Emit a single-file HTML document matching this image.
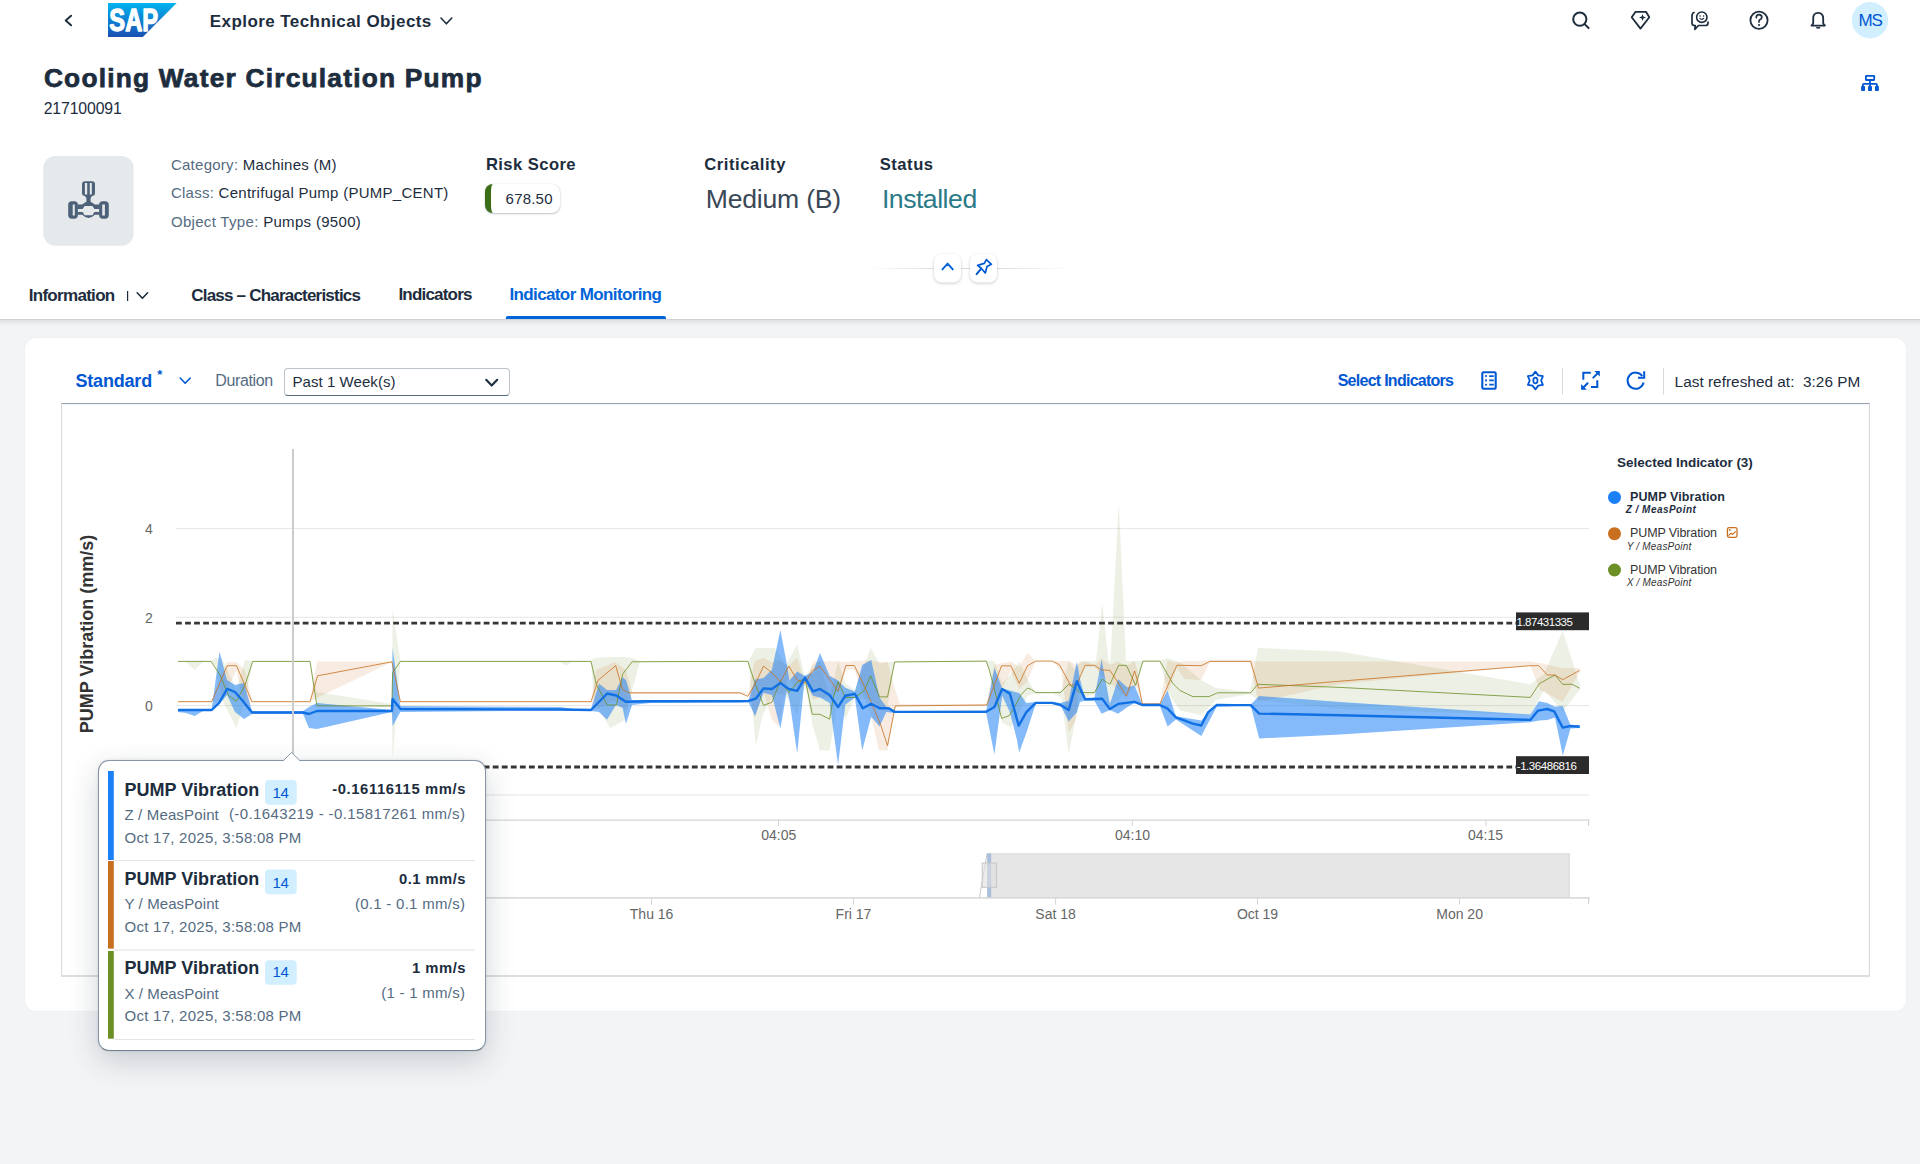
<!DOCTYPE html>
<html><head><meta charset="utf-8"><title>Explore Technical Objects</title>
<style>
html,body{margin:0;padding:0;}
body{width:1920px;height:1164px;overflow:hidden;background:#f3f4f6;position:relative;font-family:'Liberation Sans', sans-serif;}
.t{position:absolute;white-space:nowrap;font-family:'Liberation Sans', sans-serif;z-index:10}
svg{position:absolute;overflow:visible}
</style></head><body>
<div style="position:absolute;left:0px;top:0px;width:1920px;height:319px;background:#fff;z-index:1"></div><div style="position:absolute;left:0px;top:319px;width:1920px;height:1px;background:#cfd2d6;z-index:1"></div><div style="position:absolute;left:0px;top:320px;width:1920px;height:6px;background:linear-gradient(#dfe2e5,#e6e9eb 40%,rgba(243,244,246,0));z-index:1"></div><div style="position:absolute;left:25px;top:338px;width:1881px;height:673px;background:#fff;border-radius:11px;box-shadow:0 0 2px rgba(29,45,62,0.06)"></div><div style="position:absolute;left:61px;top:403px;width:1808.5px;height:573.5px;border-top:1.5px solid #97a3af;border-left:1px solid #dadada;border-right:1px solid #dadada;border-bottom:2px solid #dedede;box-sizing:border-box;background:#fff;box-shadow:inset 0 1px 2px rgba(0,0,0,0.05)"></div><svg style="left:0;top:0;z-index:6" width="1920" height="60" viewBox="0 0 1920 60"><path d="M71.1 15.7 L65.7 20.5 L71.1 25.3" fill="none" stroke="#1d2d3e" stroke-width="1.9" stroke-linecap="round" stroke-linejoin="round"/><defs><linearGradient id="sapg" x1="0" y1="0" x2="0" y2="1"><stop offset="0" stop-color="#00b4f0"/><stop offset="1" stop-color="#1c4fb3"/></linearGradient></defs><polygon points="108,2.9 176.7,2.9 142.8,36.9 108,36.9" fill="url(#sapg)"/><text x="109.3" y="30.8" font-family="Liberation Sans" font-weight="bold" font-size="30.5" textLength="48.8" lengthAdjust="spacingAndGlyphs" fill="#fff" stroke="#fff" stroke-width="1.3" stroke-linejoin="round">SAP</text><path d="M441 18 L446.4 23.8 L451.8 18" fill="none" stroke="#1d2d3e" stroke-width="1.6" stroke-linecap="round" stroke-linejoin="round"/><circle cx="1579.8" cy="19.2" r="6.6" fill="none" stroke="#1d2d3e" stroke-width="2"/><path d="M1584.6 24.1 L1588.6 28" stroke="#1d2d3e" stroke-width="2" stroke-linecap="round"/><path d="M1635.6 11.8 L1646 11.8 L1649.3 17.3 L1640.5 28.6 L1631.7 17.3 Z" fill="none" stroke="#1d2d3e" stroke-width="1.8" stroke-linejoin="round"/><path d="M1642.5 14 L1643.4 16.6 L1646 17.5 L1643.4 18.4 L1642.5 21 L1641.6 18.4 L1639 17.5 L1641.6 16.6 Z" fill="#1d2d3e"/><path d="M1694 12.5 Q1692 13 1692 16 L1692 23 Q1692 25.5 1694.5 25.5 L1695.3 25.5 L1694.8 29.3 L1698.5 25.5 L1705.5 25.5 Q1708 25.5 1708 23 L1708 22" fill="none" stroke="#1d2d3e" stroke-width="1.7" stroke-linecap="round" stroke-linejoin="round"/><circle cx="1701.8" cy="17.2" r="5.2" fill="none" stroke="#1d2d3e" stroke-width="1.6"/><path d="M1699.6 18.2 Q1701.8 20.4 1704 18.2" fill="none" stroke="#1d2d3e" stroke-width="1.2"/><circle cx="1700" cy="16" r="0.8" fill="#1d2d3e"/><circle cx="1703.6" cy="16" r="0.8" fill="#1d2d3e"/><circle cx="1759" cy="20.3" r="8.6" fill="none" stroke="#1d2d3e" stroke-width="1.8"/><path d="M1756.3 17.6 Q1756.3 14.6 1759 14.6 Q1761.8 14.6 1761.8 17.3 Q1761.8 19 1759.8 19.8 Q1759 20.3 1759 22" fill="none" stroke="#1d2d3e" stroke-width="1.7" stroke-linecap="round"/><circle cx="1759" cy="25" r="1.1" fill="#1d2d3e"/><path d="M1811.5 25.6 L1813.2 23.5 L1813.2 18.5 Q1813.2 12.8 1818.2 12.8 Q1823.2 12.8 1823.2 18.5 L1823.2 23.5 L1824.9 25.6 Z" fill="none" stroke="#1d2d3e" stroke-width="1.8" stroke-linejoin="round"/><path d="M1816.3 27.3 Q1818.2 28.6 1820.1 27.3" fill="none" stroke="#1d2d3e" stroke-width="1.6"/><circle cx="1870" cy="20.2" r="18.2" fill="#d1efff"/></svg><div class="t" style="left:209.80px;top:12.55px;font-size:17px;line-height:17px;color:#1d2d3e;font-weight:bold;letter-spacing:0.425px;">Explore Technical Objects</div><div class="t" style="left:1858.40px;top:11.65px;font-size:17px;line-height:17px;color:#0057d2;letter-spacing:-1.100px;z-index:7">MS</div><div class="t" style="left:43.90px;top:64.64px;font-size:26.3px;line-height:26.3px;color:#1d2d3e;font-weight:bold;letter-spacing:1.218px;-webkit-text-stroke:0.75px #1d2d3e">Cooling Water Circulation Pump</div><div class="t" style="left:43.70px;top:101.17px;font-size:15.8px;line-height:15.8px;color:#1d2d3e;letter-spacing:-0.129px;">217100091</div><svg style="left:0;top:0;z-index:6" width="1920" height="330" viewBox="0 0 1920 330"><rect x="1865.9" y="75.8" width="8.3" height="4.2" rx="0.4" fill="none" stroke="#0057d2" stroke-width="1.8"/><path d="M1870 80.8 V86.2 M1862.9 86.4 V85 Q1862.9 83.9 1864 83.9 H1875.9 Q1877 83.9 1877 85 V86.4" fill="none" stroke="#0057d2" stroke-width="1.8"/><rect x="1861.1" y="86" width="3.9" height="4.9" rx="0.7" fill="#0057d2"/><rect x="1868.05" y="86" width="3.9" height="4.9" rx="0.7" fill="#0057d2"/><rect x="1875" y="86" width="3.9" height="4.9" rx="0.7" fill="#0057d2"/><rect x="43.3" y="156" width="90.3" height="89.8" rx="12" fill="#e6e9ec"/><path fill-rule="evenodd" fill="#4d6279" d="M85 181.2 H92 Q95 181.2 95 184.2 V193 Q95 196 92 196 H85 Q82 196 82 193 V184.2 Q82 181.2 85 181.2 Z M84.9 182.9 V194.4 H87.2 V182.9 Z M89.8 182.9 V194.4 H91.8 V182.9 Z"/><path fill="#4d6279" d="M84.5 195.5 H92.5 L90.6 198 V202.5 H86.4 V198 Z"/><path fill-rule="evenodd" fill="#4d6279" d="M71.8 201.2 H74.3 Q77.9 201.2 77.9 204.8 V215.1 Q77.9 218.7 74.3 218.7 H71.8 Q68.2 218.7 68.2 215.1 V204.8 Q68.2 201.2 71.8 201.2 Z M72.7 204.5 V215.4 H74.8 V204.5 Z"/><path fill-rule="evenodd" fill="#4d6279" d="M102.7 201.2 H105.2 Q108.8 201.2 108.8 204.8 V215.1 Q108.8 218.7 105.2 218.7 H102.7 Q99.1 218.7 99.1 215.1 V204.8 Q99.1 201.2 102.7 201.2 Z M102.2 204.5 V215.4 H104.9 V204.5 Z"/><path fill-rule="evenodd" fill="#4d6279" d="M77.5 204.5 H82.2 Q88.5 198.6 94.8 204.5 H99.5 V214.8 H94.8 Q88.5 221.2 82.2 214.8 H77.5 Z M77.5 209 H82.6 L84.6 206.1 H92.4 L94.4 209 H99.5 V211.9 H94.4 L92.4 215.2 H84.6 L82.6 211.9 H77.5 Z"/><defs><linearGradient id="clg" x1="0" x2="1"><stop offset="0" stop-color="#d9dde2" stop-opacity="0"/><stop offset="0.35" stop-color="#d9dde2"/><stop offset="0.65" stop-color="#d9dde2"/><stop offset="1" stop-color="#d9dde2" stop-opacity="0"/></linearGradient></defs><rect x="866" y="268" width="204" height="1" fill="url(#clg)"/><rect x="934" y="254" width="27" height="28.5" rx="8" fill="#fff" style="filter:drop-shadow(0 1px 1.5px rgba(0,0,0,0.2))"/><rect x="970" y="254" width="27" height="28.5" rx="8" fill="#fff" style="filter:drop-shadow(0 1px 1.5px rgba(0,0,0,0.2))"/><path d="M942.4 269.4 L947.6 263.6 L952.8 269.4" fill="none" stroke="#0064d9" stroke-width="1.9" stroke-linecap="round" stroke-linejoin="round"/><path d="M976.6 274.2 L980.8 269.2" stroke="#0057d2" stroke-width="1.9" stroke-linecap="round"/><path d="M977.6 265.4 L984.3 263.4 L986.4 259.6 L991.4 264.3 L987 266.6 L985.3 273 L980.9 268 Z" fill="none" stroke="#0057d2" stroke-width="1.7" stroke-linejoin="round"/><rect x="127" y="291" width="1.2" height="10" fill="#1d2d3e"/><path d="M137.2 292.8 L142.4 298.2 L147.6 292.8" fill="none" stroke="#1d2d3e" stroke-width="1.6" stroke-linecap="round" stroke-linejoin="round"/><path d="M505.8 319 L505.8 318 Q505.8 316 507.8 316 L664 316 Q666 316 666 318 L666 319 Z" fill="#0064d9"/></svg><div style="position:absolute;left:485px;top:183.5px;width:75px;height:29.5px;box-sizing:border-box;border-left:6px solid #3a6d16;border-radius:8px;background:#fff;box-shadow:0 1px 2px rgba(29,45,62,0.28),0 0 1px rgba(29,45,62,0.2);z-index:7"></div><div class="t" style="left:170.90px;top:157.25px;font-size:15px;line-height:15px;letter-spacing:0.267px;"><span style="color:#556b82;">Category: </span><span style="color:#1d2d3e;">Machines (M)</span></div><div class="t" style="left:170.90px;top:184.85px;font-size:15px;line-height:15px;letter-spacing:0.265px;"><span style="color:#556b82;">Class: </span><span style="color:#1d2d3e;">Centrifugal Pump (PUMP_CENT)</span></div><div class="t" style="left:170.90px;top:214.05px;font-size:15px;line-height:15px;letter-spacing:0.318px;"><span style="color:#556b82;">Object Type: </span><span style="color:#1d2d3e;">Pumps (9500)</span></div><div class="t" style="left:485.90px;top:157.09px;font-size:16.6px;line-height:16.6px;color:#1d2d3e;font-weight:bold;letter-spacing:0.434px;">Risk Score</div><div class="t" style="left:505.60px;top:191.00px;font-size:15px;line-height:15px;color:#1d2d3e;letter-spacing:0.202px;">678.50</div><div class="t" style="left:704.20px;top:156.89px;font-size:16.6px;line-height:16.6px;color:#1d2d3e;font-weight:bold;letter-spacing:0.556px;">Criticality</div><div class="t" style="left:705.80px;top:185.59px;font-size:26.6px;line-height:26.6px;color:#3a4756;letter-spacing:-0.228px;">Medium (B)</div><div class="t" style="left:879.70px;top:156.79px;font-size:16.6px;line-height:16.6px;color:#1d2d3e;font-weight:bold;letter-spacing:0.533px;">Status</div><div class="t" style="left:881.90px;top:185.69px;font-size:26.6px;line-height:26.6px;color:#2a7a87;letter-spacing:-0.472px;">Installed</div><div class="t" style="left:28.70px;top:286.95px;font-size:17px;line-height:17px;color:#1d2d3e;font-weight:bold;letter-spacing:-0.698px;">Information</div><div class="t" style="left:191.30px;top:286.95px;font-size:17px;line-height:17px;color:#1d2d3e;font-weight:bold;letter-spacing:-0.794px;">Class – Characteristics</div><div class="t" style="left:398.40px;top:286.35px;font-size:17px;line-height:17px;color:#1d2d3e;font-weight:bold;letter-spacing:-0.793px;">Indicators</div><div class="t" style="left:509.40px;top:286.35px;font-size:17px;line-height:17px;color:#0064d9;font-weight:bold;letter-spacing:-0.616px;">Indicator Monitoring</div><div class="t" style="left:75.50px;top:371.60px;font-size:18px;line-height:18px;color:#0057d2;font-weight:bold;letter-spacing:-0.190px;">Standard</div><div class="t" style="left:157.20px;top:368.45px;font-size:13px;line-height:13px;color:#0057d2;font-weight:bold;">*</div><div class="t" style="left:215.30px;top:373.30px;font-size:16px;line-height:16px;color:#556b82;letter-spacing:-0.390px;">Duration</div><div style="position:absolute;left:283.5px;top:367.5px;width:226px;height:28px;box-sizing:border-box;border:1px solid #bcc3ca;border-bottom:1px solid #556b82;border-radius:4px;background:#fff;z-index:4"></div><div class="t" style="left:292.40px;top:373.95px;font-size:15px;line-height:15px;color:#1d2d3e;letter-spacing:0.071px;">Past 1 Week(s)</div><div class="t" style="left:1337.70px;top:372.50px;font-size:16px;line-height:16px;color:#0057d2;font-weight:bold;letter-spacing:-0.735px;">Select Indicators</div><div class="t" style="left:1674.60px;top:373.69px;font-size:15.3px;line-height:15.3px;color:#1d2d3e;letter-spacing:0.044px;white-space:pre">Last refreshed at:  3:26 PM</div><svg style="left:0;top:330px;z-index:6" width="1920" height="80" viewBox="0 330 1920 80"><path d="M180.2 378 L185.2 383.2 L190.2 378" fill="none" stroke="#0057d2" stroke-width="1.6" stroke-linecap="round" stroke-linejoin="round"/><path d="M486.2 379.8 L491.7 385.4 L497.2 379.8" fill="none" stroke="#1d2d3e" stroke-width="2.1" stroke-linecap="round" stroke-linejoin="round"/><rect x="1482.3" y="372.3" width="13.4" height="16.4" rx="1.2" fill="none" stroke="#0057d2" stroke-width="2.1"/><circle cx="1486" cy="376.1" r="1.05" fill="#0057d2"/><circle cx="1486" cy="380.4" r="1.05" fill="#0057d2"/><circle cx="1486" cy="384.7" r="1.05" fill="#0057d2"/><path d="M1489.2 376.1 H1493.8 M1489.2 380.4 H1493.8 M1489.2 384.7 H1493.8" stroke="#0057d2" stroke-width="1.7"/><polygon points="1535.40,371.60 1538.26,375.39 1542.88,376.05 1541.12,380.50 1542.88,384.95 1538.26,385.61 1535.40,389.40 1532.54,385.61 1527.92,384.95 1529.68,380.50 1527.92,376.05 1532.54,375.39" fill="none" stroke="#0057d2" stroke-width="1.8" stroke-linejoin="round"/><ellipse cx="1535.4" cy="380.5" rx="2.1" ry="2.9" fill="none" stroke="#0057d2" stroke-width="1.7"/><rect x="1562" y="367.7" width="1" height="26.7" fill="#d5dadd"/><path d="M1583.3 379.8 V372.8 H1590.8 M1597.3 380.2 V387.1 H1591" fill="none" stroke="#0057d2" stroke-width="2"/><path d="M1593.3 377.6 L1598.3 372.6 M1587.6 383.2 L1582.6 388.2" stroke="#0057d2" stroke-width="2" stroke-linecap="round"/><polygon points="1594.4,371.1 1599.8,371.1 1599.8,376.6" fill="#0057d2"/><polygon points="1581.1,384.1 1581.1,389.7 1586.8,389.7" fill="#0057d2"/><path d="M1643.6 382.6 A8.1 8.1 0 1 1 1642.3 376.0" fill="none" stroke="#0057d2" stroke-width="2"/><path d="M1644.2 371.2 V377.8 H1638" fill="none" stroke="#0057d2" stroke-width="2"/><rect x="1663" y="368.2" width="1" height="26.3" fill="#d5dadd"/></svg><svg style="left:0;top:0;z-index:3" width="1920" height="1164" viewBox="0 0 1920 1164"><rect x="176" y="527.9" width="1413" height="1" fill="#e6e6e6"/><rect x="176" y="616.8" width="1413" height="1" fill="#e6e6e6"/><rect x="176" y="705.1" width="1413" height="1" fill="#e6e6e6"/><rect x="176" y="794.5" width="1413" height="1" fill="#e6e6e6"/><rect x="176" y="819.5" width="1413.5" height="1.2" fill="#d4d4d4"/><rect x="778.0" y="820" width="1" height="6" fill="#d4d4d4"/><rect x="1131.8" y="820" width="1" height="6" fill="#d4d4d4"/><rect x="1485.5" y="820" width="1" height="6" fill="#d4d4d4"/><rect x="1588" y="819.5" width="1.2" height="6.5" fill="#d4d4d4"/><rect x="987" y="853.4" width="582.4" height="44.4" fill="#e6e6e6"/><rect x="1568.6" y="853.4" width="1" height="44.4" fill="#d6d6d6"/><rect x="987" y="853.4" width="582.4" height="1" fill="#dcdcdc"/><path d="M979.5 897.5 L987 853.6" stroke="#c8c8c8" stroke-width="1" fill="none"/><rect x="987.2" y="853.4" width="4" height="44.4" fill="#a9bfdc"/><rect x="982.2" y="863" width="14.4" height="24.3" fill="#e0e0e0" fill-opacity="0.6" stroke="#c6c6c6" stroke-width="1"/><rect x="176" y="897.2" width="1413.5" height="1.4" fill="#d4d4d4"/><rect x="651.0" y="898" width="1" height="6.5" fill="#d4d4d4"/><rect x="853.0" y="898" width="1" height="6.5" fill="#d4d4d4"/><rect x="1055.1" y="898" width="1" height="6.5" fill="#d4d4d4"/><rect x="1257.0" y="898" width="1" height="6.5" fill="#d4d4d4"/><rect x="1459.0" y="898" width="1" height="6.5" fill="#d4d4d4"/><rect x="1588" y="897.2" width="1.2" height="7" fill="#d4d4d4"/><polygon points="178.0,661.0 186.0,661.0 194.7,661.0 203.0,661.0 211.0,661.0 215.0,658.0 222.0,658.0 236.5,690.0 245.0,660.0 252.7,661.0 310.0,661.0 317.0,692.0 391.9,704.0 392.6,609.3 400.4,661.0 560.0,661.0 566.0,661.0 572.0,661.0 591.0,661.0 594.0,658.0 610.0,657.0 625.0,657.0 632.0,658.0 640.0,661.0 748.4,661.3 755.7,648.0 762.9,648.0 775.0,648.0 785.8,665.0 797.2,644.5 805.0,678.2 812.3,666.1 820.0,661.3 829.6,697.5 838.1,661.3 845.3,683.0 854.9,690.2 870.6,648.1 879.6,663.7 887.5,661.9 894.7,661.9 900.0,661.5 986.2,661.0 990.0,661.0 994.4,661.0 1002.2,683.3 1010.9,674.0 1019.2,661.6 1027.4,679.2 1035.7,692.6 1052.2,692.6 1061.4,690.0 1068.7,661.1 1074.8,670.0 1080.0,661.0 1094.4,661.0 1096.0,661.0 1102.3,603.4 1108.5,661.0 1110.5,661.0 1118.8,502.4 1126.0,661.0 1135.7,661.0 1142.9,661.0 1159.9,661.0 1167.6,658.0 1172.8,660.0 1180.0,662.0 1201.0,680.0 1216.0,688.0 1250.0,692.0 1258.0,647.9 1340.0,651.6 1530.3,684.3 1544.0,674.0 1562.7,631.0 1579.7,684.3 1579.7,690.0 1562.7,711.4 1544.0,690.0 1530.3,715.2 1340.0,709.0 1258.0,700.0 1250.0,694.0 1216.0,700.0 1201.0,715.0 1180.0,710.5 1172.8,700.0 1167.6,690.0 1159.9,662.0 1142.9,662.0 1135.7,686.4 1126.0,690.0 1118.8,700.0 1110.5,705.0 1108.5,705.0 1102.3,700.0 1096.0,693.0 1094.4,693.6 1080.0,700.0 1074.8,722.5 1068.7,754.4 1061.4,697.7 1052.2,693.6 1035.7,693.6 1027.4,695.7 1019.2,712.2 1010.9,727.6 1002.2,722.5 994.4,691.5 990.0,672.0 986.2,662.0 900.0,662.0 894.7,662.5 887.5,707.1 879.6,707.1 870.6,700.0 854.9,697.5 845.3,719.2 838.1,700.0 829.6,750.5 820.0,750.5 812.3,724.0 805.0,684.2 797.2,714.3 785.8,695.0 775.0,692.7 762.9,714.3 755.7,745.7 748.4,662.0 640.0,662.0 632.0,690.0 625.0,720.0 610.0,728.3 594.0,700.0 591.0,662.0 572.0,662.0 566.0,665.7 560.0,662.0 400.4,662.0 392.6,759.0 391.9,707.0 317.0,706.0 310.0,662.0 252.7,662.0 245.0,700.0 236.5,728.0 222.0,700.0 215.0,665.0 211.0,662.0 203.0,662.0 194.7,670.0 186.0,662.0 178.0,662.0" fill="#6c8f26" fill-opacity="0.12"/><polygon points="178.0,701.0 211.7,701.0 220.0,680.0 227.0,662.0 236.5,662.0 245.0,670.0 252.0,701.0 310.0,701.0 317.0,661.4 391.9,661.4 400.4,701.0 591.0,701.0 596.0,670.0 615.0,662.0 626.0,670.0 632.0,692.0 739.7,692.0 748.4,692.7 754.5,661.3 763.5,657.7 771.9,662.5 778.6,660.0 788.2,666.1 797.2,657.7 805.0,683.0 813.5,661.3 820.0,661.3 829.6,661.3 838.1,661.3 845.9,662.0 854.3,661.0 870.6,660.5 879.0,661.9 887.5,661.9 895.3,690.0 900.0,704.0 986.3,704.0 994.4,664.7 1010.9,661.6 1019.2,667.0 1027.4,652.9 1035.7,661.1 1052.2,661.1 1061.4,661.1 1068.7,661.1 1076.0,665.0 1080.0,663.2 1085.2,661.6 1094.4,664.7 1101.6,658.6 1109.9,664.7 1118.1,661.6 1126.4,665.8 1134.6,661.1 1137.7,670.9 1142.4,702.9 1159.9,702.9 1167.6,660.6 1176.9,662.7 1184.0,661.0 1201.0,661.0 1210.0,660.0 1250.0,660.0 1258.0,661.4 1340.0,661.4 1530.3,661.4 1540.0,663.0 1562.7,668.0 1579.7,668.0 1579.7,672.0 1562.7,702.0 1540.0,690.0 1530.3,665.7 1340.0,684.0 1258.0,702.0 1250.0,662.0 1210.0,662.0 1201.0,680.0 1184.0,679.0 1176.9,667.8 1167.6,693.6 1159.9,705.0 1142.4,705.0 1137.7,690.0 1134.6,685.4 1126.4,698.0 1118.1,690.0 1109.9,683.3 1101.6,676.0 1094.4,666.8 1085.2,666.8 1080.0,675.0 1076.0,720.0 1068.7,732.8 1061.4,671.0 1052.2,661.1 1035.7,661.1 1027.4,681.2 1019.2,689.5 1010.9,671.0 994.4,704.0 986.3,706.0 900.0,706.0 895.3,707.1 887.5,750.5 879.0,750.5 870.6,714.3 854.3,669.8 845.9,669.8 838.1,691.0 829.6,697.5 820.0,697.5 813.5,700.0 805.0,685.4 797.2,690.0 788.2,678.2 778.6,726.4 771.9,719.2 763.5,692.7 754.5,718.0 748.4,694.0 739.7,694.0 632.0,694.0 626.0,710.0 615.0,700.0 596.0,710.0 591.0,702.0 400.4,702.0 391.9,662.0 317.0,698.0 310.0,702.0 252.0,702.0 245.0,710.0 236.5,670.0 227.0,690.0 220.0,702.0 211.7,702.0 178.0,702.0" fill="#c8701f" fill-opacity="0.13"/><polygon points="178.0,709.0 186.0,709.0 194.7,709.0 203.0,709.0 211.7,709.0 219.5,651.8 227.0,680.0 235.0,685.0 244.0,683.0 252.0,711.0 303.0,711.0 309.0,707.0 317.0,703.0 391.9,710.0 392.6,647.9 400.4,706.0 560.8,707.0 573.0,709.0 591.0,709.0 599.0,683.5 607.0,690.0 616.0,690.0 622.6,677.3 626.0,680.0 632.0,700.0 650.0,700.0 748.4,700.5 755.1,679.4 763.5,678.0 771.9,669.8 780.4,630.0 787.0,665.0 789.4,680.6 797.2,671.6 804.5,675.8 812.9,672.2 820.0,652.9 829.6,675.8 838.1,680.6 845.3,687.8 854.9,691.4 862.2,665.0 871.2,660.1 879.6,697.5 886.3,707.1 894.7,710.9 900.0,710.9 986.2,710.5 994.4,667.8 1002.2,688.4 1009.9,690.5 1017.0,692.6 1019.2,693.0 1026.4,702.9 1035.7,701.9 1052.2,701.9 1060.4,702.9 1068.7,700.8 1076.9,661.6 1080.0,679.2 1085.2,698.8 1094.4,697.7 1101.6,659.6 1109.9,703.9 1118.1,679.2 1127.4,687.4 1134.6,685.4 1142.4,704.5 1159.9,704.5 1167.6,690.5 1175.9,716.3 1201.3,720.6 1216.7,703.6 1250.7,704.6 1259.2,695.9 1340.0,702.1 1530.3,714.5 1539.0,701.3 1547.3,702.9 1555.0,706.7 1562.8,706.0 1570.5,725.3 1579.7,725.0 1579.7,728.0 1570.5,728.4 1562.8,755.5 1555.0,717.6 1547.3,720.0 1539.0,720.6 1530.3,722.2 1340.0,734.6 1259.2,738.4 1250.7,705.6 1216.7,706.7 1201.3,736.0 1175.9,719.4 1167.6,726.6 1159.9,706.0 1142.4,706.0 1134.6,702.9 1127.4,707.0 1118.1,713.7 1109.9,710.0 1101.6,713.7 1094.4,700.8 1085.2,700.8 1080.0,701.9 1076.9,712.2 1068.7,721.4 1060.4,705.0 1052.2,703.9 1035.7,703.9 1026.4,732.8 1019.2,752.4 1017.0,740.0 1009.9,712.2 1002.2,695.7 994.4,754.4 986.2,713.0 900.0,713.0 894.7,713.1 886.3,712.0 879.6,726.4 871.2,716.7 862.2,750.5 854.9,697.5 845.3,704.7 838.1,765.0 829.6,703.0 820.0,697.5 812.9,695.7 804.5,680.6 797.2,753.5 789.4,700.0 787.0,690.2 780.4,728.8 771.9,695.0 763.5,692.7 755.1,716.0 748.4,702.0 650.0,703.0 632.0,705.0 626.0,723.7 622.6,708.0 616.0,705.0 607.0,719.8 599.0,712.0 591.0,711.0 573.0,711.0 560.8,710.5 400.4,712.0 392.6,726.0 391.9,712.0 317.0,729.0 309.0,728.0 303.0,714.0 252.0,714.0 244.0,719.0 235.0,712.0 227.0,695.0 219.5,704.0 211.7,711.0 203.0,711.0 194.7,716.0 186.0,713.0 178.0,712.0" fill="#1b7ff6" fill-opacity="0.54"/><polyline points="178.0,661.4 211.0,661.4 220.0,675.0 228.7,695.9 236.5,701.2 245.0,685.0 252.7,661.4 310.0,661.4 316.9,705.9 391.9,705.9 392.6,672.7 400.4,661.4 591.0,661.4 596.3,684.3 607.2,705.0 616.4,705.0 622.6,674.2 632.0,661.8 740.0,661.3 747.8,661.3 754.5,681.8 763.5,705.3 771.9,702.3 780.4,680.6 788.8,692.7 797.2,682.4 805.0,678.2 812.3,714.3 820.0,714.3 829.6,719.2 833.3,697.5 838.1,681.8 845.3,697.5 854.9,697.5 864.6,690.2 870.6,675.8 879.6,696.9 887.5,696.9 894.7,661.9 900.0,661.9 986.2,661.1 989.3,670.0 993.4,685.4 1001.6,718.4 1008.9,715.8 1014.0,708.0 1021.2,694.6 1027.4,688.0 1031.5,689.5 1035.7,692.6 1060.4,692.6 1068.7,684.3 1076.9,689.5 1080.0,692.6 1094.4,692.6 1102.2,679.2 1109.9,684.3 1118.7,665.3 1126.4,665.3 1135.7,685.4 1142.9,661.1 1159.9,661.1 1172.8,683.3 1180.0,690.5 1192.8,696.6 1209.0,696.6 1217.5,692.8 1250.7,692.8 1257.7,684.3 1340.0,687.4 1530.3,697.4 1539.5,683.5 1555.0,675.0 1562.7,684.3 1572.0,684.3 1579.7,688.2" fill="none" stroke="#6c8f26" stroke-width="1" stroke-opacity="0.8" stroke-linejoin="round"/><polyline points="178.0,701.7 211.7,701.7 227.2,665.7 236.5,665.7 252.0,701.7 310.0,701.7 317.6,675.8 391.9,661.8 400.4,701.7 591.0,701.7 598.0,680.4 615.7,665.7 622.6,689.7 628.8,692.8 739.7,692.8 747.8,696.3 755.7,683.0 763.5,666.1 771.9,672.8 780.4,681.8 788.8,666.1 797.2,680.0 805.0,683.0 812.3,671.0 820.0,666.1 838.1,691.4 845.9,665.5 854.3,665.5 864.6,686.6 880.8,725.2 887.5,745.7 895.3,705.9 900.0,705.9 986.7,705.0 1001.6,665.8 1010.9,665.8 1019.2,683.3 1027.4,665.8 1035.7,661.1 1052.2,661.1 1059.4,664.7 1070.7,685.4 1077.8,683.6 1080.0,677.1 1085.2,665.3 1094.4,665.3 1101.6,669.9 1109.9,670.4 1117.1,681.2 1126.4,696.2 1134.6,670.9 1137.7,681.2 1142.4,703.9 1159.9,703.9 1172.8,674.0 1176.9,665.3 1180.0,665.3 1201.3,665.7 1209.8,661.4 1250.7,661.4 1258.5,688.1 1340.0,681.2 1530.3,665.7 1538.8,665.7 1547.3,675.0 1555.0,675.0 1562.7,679.7 1579.7,670.4" fill="none" stroke="#c8701f" stroke-width="1" stroke-opacity="0.8" stroke-linejoin="round"/><polyline points="178.0,710.0 211.7,710.0 219.0,703.0 227.2,688.9 235.0,692.0 242.0,700.0 252.0,712.5 303.0,712.5 309.0,714.0 316.9,711.0 391.9,711.0 392.6,699.0 400.4,709.0 560.8,709.5 591.0,710.0 607.2,693.5 616.4,695.5 625.7,701.7 650.0,701.3 740.0,701.3 748.4,701.0 755.7,698.7 763.5,688.4 771.9,689.0 780.4,683.0 788.8,689.0 797.2,690.8 805.0,677.6 812.9,691.4 820.0,689.0 829.6,695.0 838.1,707.1 845.3,695.7 854.9,693.9 862.8,708.3 871.2,703.7 879.6,708.3 888.7,708.3 894.7,711.9 900.0,711.9 986.2,711.8 994.4,707.0 1002.2,689.0 1009.9,693.6 1018.7,725.6 1026.4,712.2 1035.7,702.9 1052.2,702.9 1060.4,705.0 1068.7,710.1 1076.9,681.2 1080.0,688.5 1085.2,699.3 1102.2,698.8 1109.9,709.1 1118.1,703.9 1134.6,701.9 1142.4,705.0 1159.9,705.0 1167.6,708.6 1175.9,717.3 1180.0,718.9 1192.8,723.7 1201.3,725.5 1208.2,712.1 1216.7,705.1 1250.7,705.1 1259.2,713.6 1340.0,715.2 1530.3,719.9 1538.0,710.6 1547.3,709.0 1554.2,711.4 1562.7,727.6 1570.5,726.0 1579.7,726.8" fill="none" stroke="#1170e3" stroke-width="2.4" stroke-linejoin="round"/><path d="M176 623.1 L1516 623.1 M176 767.0 L1516 767.0" stroke="#363636" stroke-width="2.9" stroke-dasharray="5.8 3.25" fill="none"/><rect x="1516" y="612.4" width="73" height="17.8" fill="#2b2b2b"/><rect x="1516" y="756.2" width="73" height="17.8" fill="#2b2b2b"/><rect x="292" y="449" width="2" height="312" fill="#cccccc"/></svg><div class="t" style="left:1516.50px;top:617.33px;font-size:11.5px;line-height:11.5px;color:#ffffff;letter-spacing:-0.489px;z-index:4">1.87431335</div><div class="t" style="left:1516.80px;top:761.12px;font-size:11.5px;line-height:11.5px;color:#ffffff;letter-spacing:-0.453px;z-index:4">-1.36486816</div><div class="t" style="left:144.92px;top:521.60px;font-size:14px;line-height:14px;color:#666666;">4</div><div class="t" style="left:144.92px;top:610.50px;font-size:14px;line-height:14px;color:#666666;">2</div><div class="t" style="left:144.92px;top:699.10px;font-size:14px;line-height:14px;color:#666666;">0</div><div class="t" style="left:761.20px;top:828.10px;font-size:14px;line-height:14px;color:#666666;letter-spacing:0.046px;">04:05</div><div class="t" style="left:1114.90px;top:828.10px;font-size:14px;line-height:14px;color:#666666;letter-spacing:0.046px;">04:10</div><div class="t" style="left:1467.90px;top:828.10px;font-size:14px;line-height:14px;color:#666666;letter-spacing:0.046px;">04:15</div><div class="t" style="left:629.82px;top:906.85px;font-size:14px;line-height:14px;color:#666666;">Thu 16</div><div class="t" style="left:835.62px;top:906.85px;font-size:14px;line-height:14px;color:#666666;">Fri 17</div><div class="t" style="left:1035.37px;top:906.85px;font-size:14px;line-height:14px;color:#666666;">Sat 18</div><div class="t" style="left:1236.88px;top:906.85px;font-size:14px;line-height:14px;color:#666666;">Oct 19</div><div class="t" style="left:1436.26px;top:906.85px;font-size:14px;line-height:14px;color:#666666;">Mon 20</div><div class="t" style="left:86.6px;top:634.2px;width:0;height:0;z-index:4"><div style="position:absolute;left:0;top:0;transform:translate(-50%,-50%) rotate(-90deg);font-size:18px;line-height:18px;font-weight:bold;color:#333333;white-space:nowrap">PUMP Vibration (mm/s)</div></div><div class="t" style="left:1617.10px;top:456.42px;font-size:13.5px;line-height:13.5px;color:#1d2d3e;font-weight:bold;letter-spacing:-0.039px;">Selected Indicator (3)</div><svg style="left:0;top:0;z-index:4" width="1920" height="620" viewBox="0 0 1920 620"><circle cx="1614.5" cy="497.4" r="6.5" fill="#1b7ff6"/><circle cx="1614.5" cy="533.7" r="6.5" fill="#c8701f"/><circle cx="1614.5" cy="570" r="6.5" fill="#6c8f26"/><rect x="1727.4" y="527.6" width="9.6" height="9.8" rx="1.8" fill="none" stroke="#c8701f" stroke-width="1.3"/><path d="M1728.5 535.5 L1730.8 533.2 L1732.5 534.5 L1735.8 531.4" fill="none" stroke="#c8701f" stroke-width="1.1"/><circle cx="1729.8" cy="530" r="0.9" fill="#c8701f"/></svg><div class="t" style="left:1630.00px;top:491.18px;font-size:12.5px;line-height:12.5px;color:#1d2d3e;font-weight:bold;letter-spacing:0.129px;">PUMP Vibration</div><div class="t" style="left:1625.80px;top:505.25px;font-size:10px;line-height:10px;color:#1d2d3e;font-weight:bold;font-style:italic;letter-spacing:0.461px;">Z / MeasPoint</div><div class="t" style="left:1630.00px;top:527.08px;font-size:12.5px;line-height:12.5px;color:#333333;letter-spacing:-0.115px;">PUMP Vibration</div><div class="t" style="left:1626.70px;top:542.20px;font-size:10px;line-height:10px;color:#333333;font-style:italic;letter-spacing:0.202px;">Y / MeasPoint</div><div class="t" style="left:1630.00px;top:564.17px;font-size:12.5px;line-height:12.5px;color:#333333;letter-spacing:-0.115px;">PUMP Vibration</div><div class="t" style="left:1626.70px;top:578.20px;font-size:10px;line-height:10px;color:#333333;font-style:italic;letter-spacing:0.186px;">X / MeasPoint</div><div style="position:absolute;left:97.5px;top:760.4px;width:388px;height:290.2px;box-sizing:border-box;border:1px solid #8596a6;border-bottom:1.5px solid #6f8091;border-radius:11px;background:#fff;box-shadow:0 10px 30px rgba(29,45,62,0.2),0 0 3px rgba(29,45,62,0.12);z-index:20"></div><svg style="left:0;top:0;z-index:21" width="1920" height="1164" viewBox="0 0 1920 1164"><path d="M282.8 761.2 L291.6 752.4 L300.4 761.2" fill="#fff" stroke="#8c9aa8" stroke-width="1" stroke-linejoin="round"/><rect x="282.3" y="761" width="18.6" height="2" fill="#fff"/><rect x="108" y="771" width="5.8" height="89" fill="#1b7ff6"/><rect x="108" y="861" width="5.8" height="87.6" fill="#c8701f"/><rect x="108" y="951" width="5.8" height="87.7" fill="#6c8f26"/><rect x="114" y="860" width="361" height="1" fill="#e5e5e5"/><rect x="114" y="949.4" width="361" height="1.2" fill="#e5e5e5"/><rect x="114" y="1039" width="361" height="1" fill="#e5e5e5"/><rect x="265" y="780" width="31.7" height="24.7" rx="4" fill="#d1efff"/><rect x="265" y="869.6" width="31.7" height="24.7" rx="4" fill="#d1efff"/><rect x="265" y="960.3" width="31.7" height="24.5" rx="4" fill="#d1efff"/></svg><div class="t" style="left:124.50px;top:780.60px;font-size:18px;line-height:18px;color:#1d2d3e;font-weight:bold;letter-spacing:0.034px;z-index:22">PUMP Vibration</div><div class="t" style="left:272.40px;top:785.15px;font-size:15px;line-height:15px;color:#0057d2;letter-spacing:-0.288px;z-index:22">14</div><div class="t" style="left:332.20px;top:782.22px;font-size:14.8px;line-height:14.8px;color:#1d2d3e;font-weight:bold;letter-spacing:0.601px;z-index:22">-0.16116115 mm/s</div><div class="t" style="left:124.50px;top:806.95px;font-size:15px;line-height:15px;color:#556b82;letter-spacing:0.146px;z-index:22">Z / MeasPoint</div><div class="t" style="left:228.90px;top:806.45px;font-size:15px;line-height:15px;color:#556b82;letter-spacing:0.391px;z-index:22">(-0.1643219 - -0.15817261 mm/s)</div><div class="t" style="left:124.50px;top:829.65px;font-size:15px;line-height:15px;color:#556b82;letter-spacing:0.257px;z-index:22">Oct 17, 2025, 3:58:08 PM</div><div class="t" style="left:124.50px;top:870.00px;font-size:18px;line-height:18px;color:#1d2d3e;font-weight:bold;letter-spacing:0.034px;z-index:22">PUMP Vibration</div><div class="t" style="left:272.40px;top:874.55px;font-size:15px;line-height:15px;color:#0057d2;letter-spacing:-0.288px;z-index:22">14</div><div class="t" style="left:399.00px;top:871.62px;font-size:14.8px;line-height:14.8px;color:#1d2d3e;font-weight:bold;letter-spacing:0.451px;z-index:22">0.1 mm/s</div><div class="t" style="left:124.50px;top:896.35px;font-size:15px;line-height:15px;color:#556b82;letter-spacing:0.098px;z-index:22">Y / MeasPoint</div><div class="t" style="left:354.90px;top:895.85px;font-size:15px;line-height:15px;color:#556b82;letter-spacing:0.280px;z-index:22">(0.1 - 0.1 mm/s)</div><div class="t" style="left:124.50px;top:919.05px;font-size:15px;line-height:15px;color:#556b82;letter-spacing:0.257px;z-index:22">Oct 17, 2025, 3:58:08 PM</div><div class="t" style="left:124.50px;top:959.40px;font-size:18px;line-height:18px;color:#1d2d3e;font-weight:bold;letter-spacing:0.034px;z-index:22">PUMP Vibration</div><div class="t" style="left:272.40px;top:963.95px;font-size:15px;line-height:15px;color:#0057d2;letter-spacing:-0.288px;z-index:22">14</div><div class="t" style="left:412.00px;top:961.02px;font-size:14.8px;line-height:14.8px;color:#1d2d3e;font-weight:bold;letter-spacing:0.500px;z-index:22">1 mm/s</div><div class="t" style="left:124.50px;top:985.75px;font-size:15px;line-height:15px;color:#556b82;letter-spacing:0.076px;z-index:22">X / MeasPoint</div><div class="t" style="left:381.20px;top:985.25px;font-size:15px;line-height:15px;color:#556b82;letter-spacing:0.266px;z-index:22">(1 - 1 mm/s)</div><div class="t" style="left:124.50px;top:1008.45px;font-size:15px;line-height:15px;color:#556b82;letter-spacing:0.257px;z-index:22">Oct 17, 2025, 3:58:08 PM</div>
</body></html>
